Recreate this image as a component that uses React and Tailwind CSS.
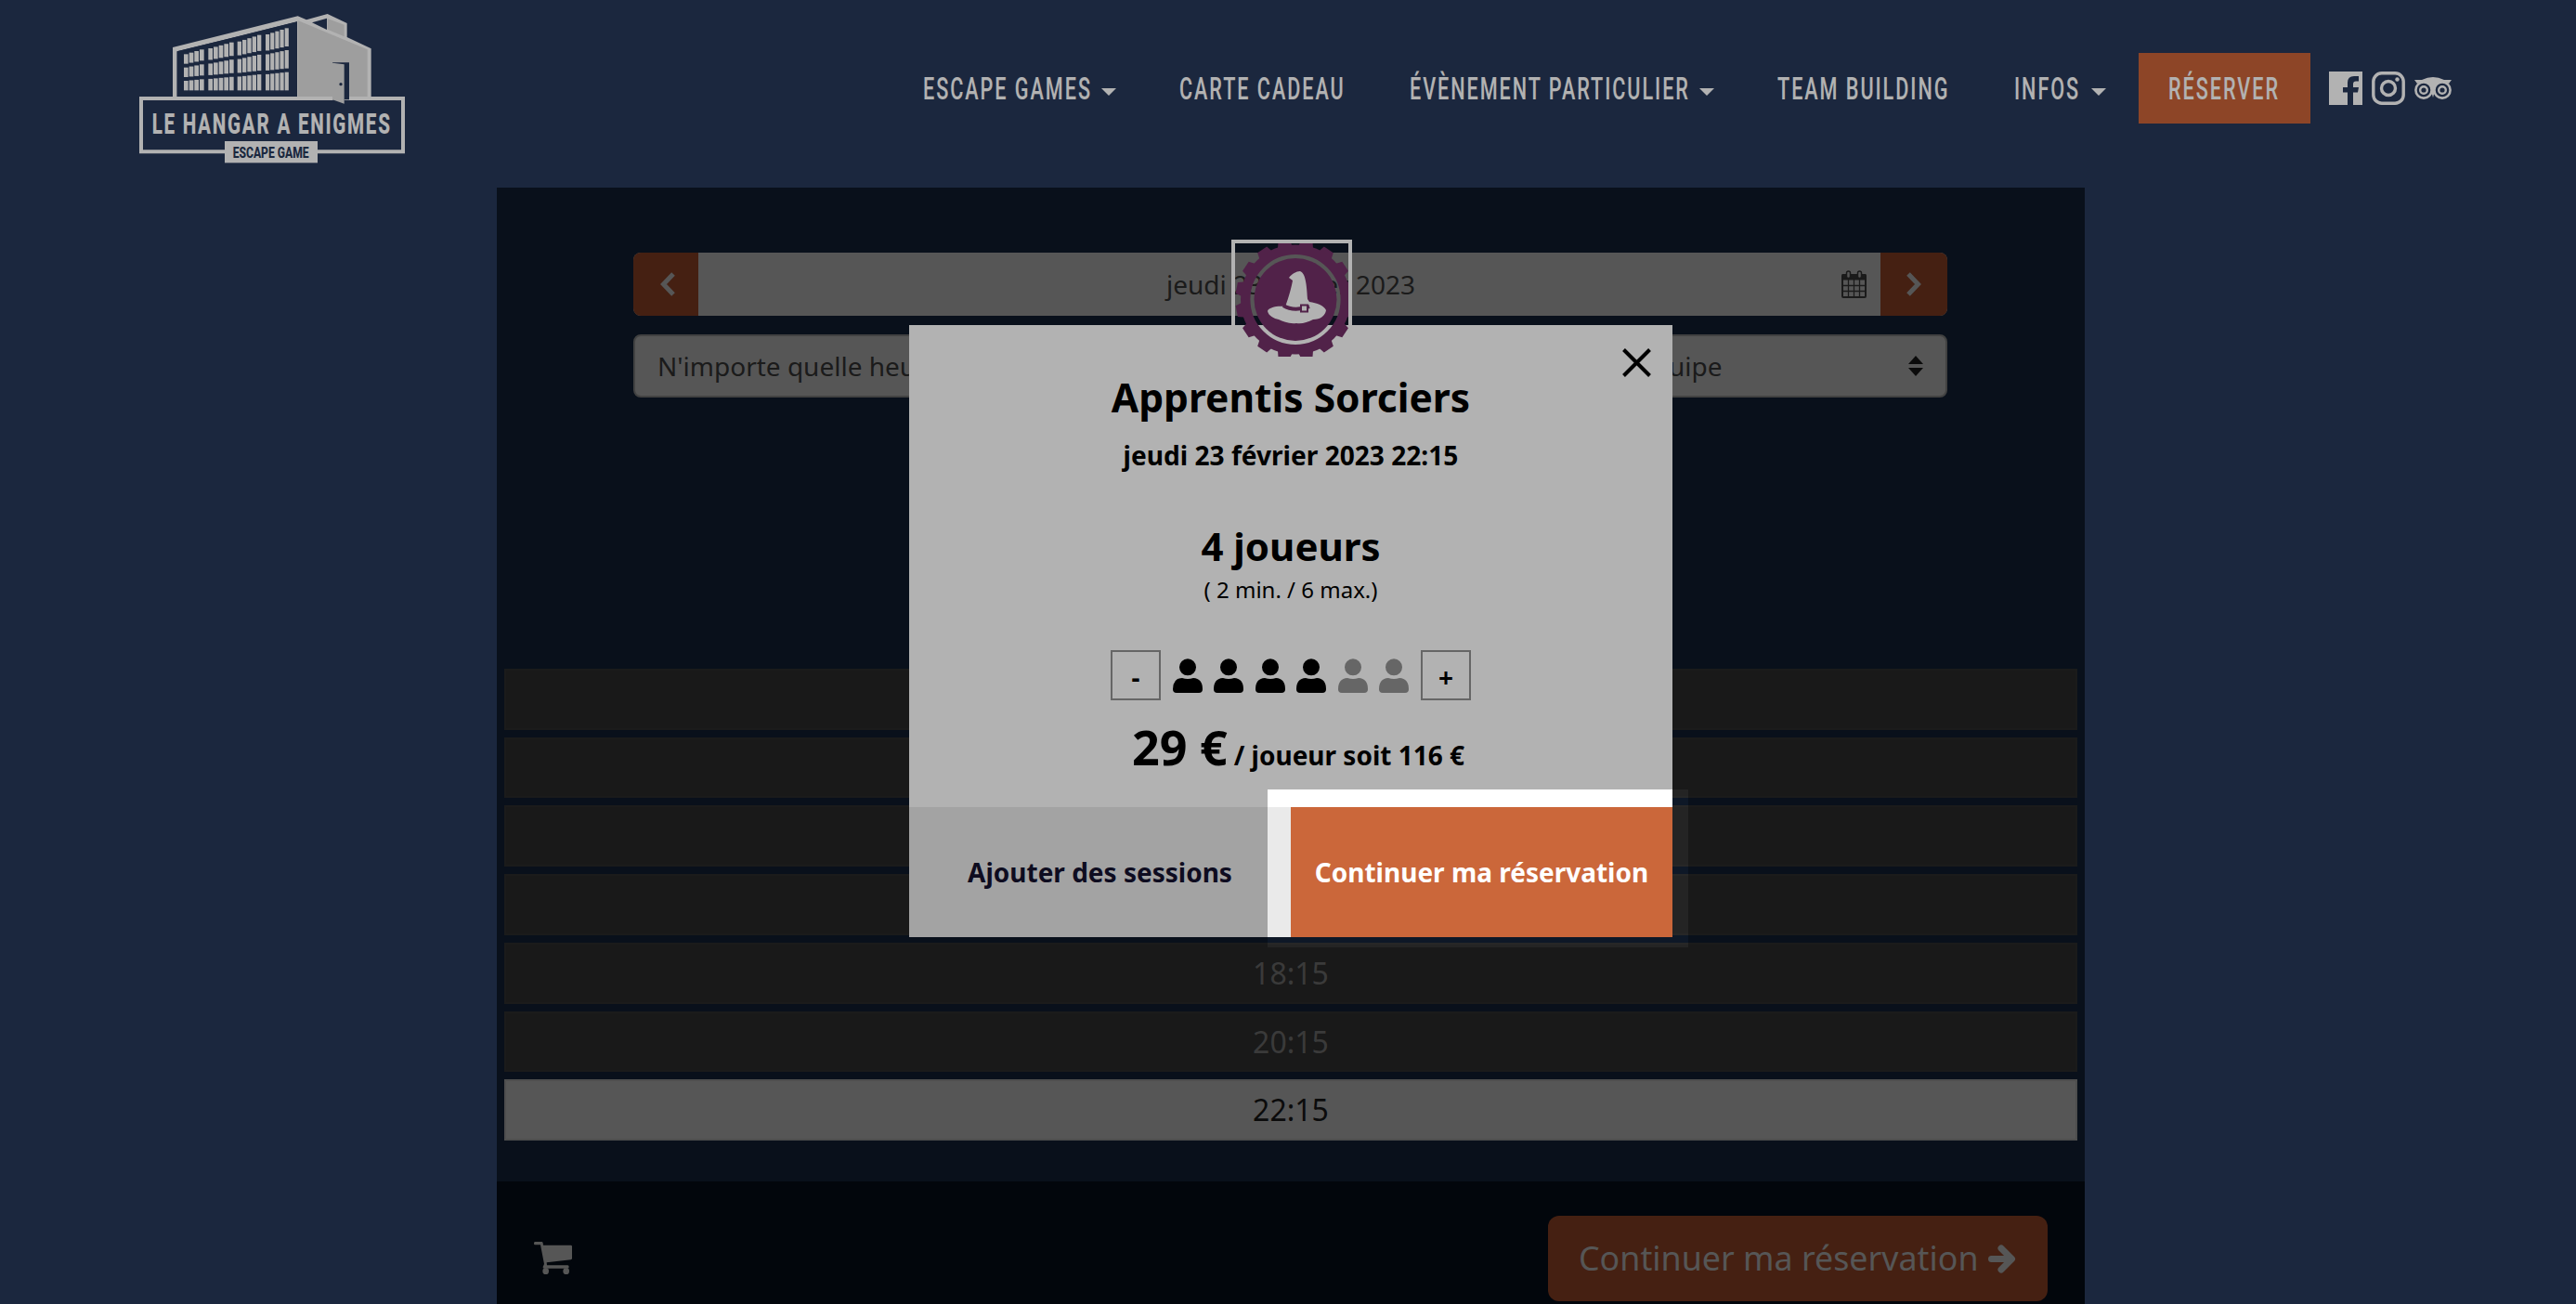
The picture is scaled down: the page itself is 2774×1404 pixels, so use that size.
import React, { useState } from 'react';

const navItems = [
    { label: 'ESCAPE GAMES', hasMenu: true, item: 'w-[276px]', text: 'w-[178px]' },
    { label: 'CARTE CADEAU', hasMenu: false, item: 'w-[248px]', text: 'w-[177px]' },
    { label: 'ÉVÈNEMENT PARTICULIER', hasMenu: true, item: 'w-[396px]', text: 'w-[298px]' },
    { label: 'TEAM BUILDING', hasMenu: false, item: 'w-[255px]', text: 'w-[185px]' },
    { label: 'INFOS', hasMenu: true, item: 'w-[134px]', text: 'w-[69px]' },
];

const slots = ['10:15', '12:15', '14:15', '16:15', '18:15', '20:15', '22:15'];

const MAX_PLAYERS = 6;
const MIN_PLAYERS = 2;
const PRICE = 29;

// Narrow uppercase lettering used in the menu
const NavText = ({ children, className }) => (
    <span className={`block shrink-0 pt-[2px] ${className}`}>
        <span className="inline-block origin-left scale-x-[0.655] whitespace-nowrap font-['Roboto'] text-[33px] leading-[40px] font-medium tracking-[3px]">
            {children}
        </span>
    </span>
);

const Logo = () => (
    <svg viewBox="0 0 990 600" className="h-[200px] w-[330px] shrink-0" fill="#ffffff">
        <path d="M168 312V153L572 52L600 64L668 45L731 75V120L809 157V312H797L570 312V70L182 166V312Z" />
        <path d="M182 312V166L570 70V312Z" fill="#28385a" />
        <path d="M618 73L666 59V96Z" fill="#28385a" />
        <path d="M572 66L797 160V312H572Z" fill="#e2e2e2" />
        <path d="M668 60L722 80V118L668 95Z" fill="#e2e2e2" />
        {[
            [204, 4, 17, 175, 160],
            [283, 5, 17, 156, 137],
            [377, 5, 16, 134, 113],
            [468, 5, 15.5, 111, 91],
        ].map(([x, n, w, y1, y2]) =>
            Array.from({ length: n }, (_, i) => {
                const top = y1 + ((y2 - y1) * i) / (n - 1);
                const h = (292 - top - 24) / 3;
                return [0, 1, 2].map((r) => (
                    <rect key={`${x}-${i}-${r}`} x={x + i * w} y={top + r * (h + 12)} width={w - 3} height={h} />
                ));
            })
        )}
        <path d="M66 318H912V490H66Z" fill="#28385a" stroke="#ffffff" strokeWidth="12" />
        <path d="M690 202H738V322H722V334L684 322V202Z" fill="#28385a" />
        <path d="M684 203L722 208V335L684 322Z" fill="#e2e2e2" />
        <circle cx="711" cy="272" r="5" fill="#28385a" />
        <text x="101" y="432" textLength="774" lengthAdjust="spacingAndGlyphs" fontFamily="Roboto" fontWeight="800" fontSize="96" letterSpacing="8">
            LE HANGAR A ENIGMES
        </text>
        <rect x="336" y="456" width="300" height="70" />
        <text x="362" y="509" textLength="246" lengthAdjust="spacingAndGlyphs" fontFamily="Roboto" fontWeight="800" fontSize="50" fill="#28385a">
            ESCAPE GAME
        </text>
    </svg>
);

const FacebookIcon = () => (
    <svg viewBox="0 0 36 36" className="h-9 w-9" fill="#ffffff">
        <path d="M0 0H36V36H26V22.500H31L32 17H26V13.500Q26 10.500 29 10.500H32V5H27Q20 5 20 12V17H15V22.500H20V36H0Z" />
    </svg>
);

const InstagramIcon = () => (
    <svg viewBox="0 0 36 36" className="h-9 w-9" fill="none" stroke="#ffffff">
        <rect x="1.8" y="1.8" width="32.4" height="32.4" rx="9" strokeWidth="3.4" />
        <circle cx="18" cy="18" r="7.5" strokeWidth="3.4" />
        <circle cx="27.5" cy="8.5" r="2.2" fill="#ffffff" stroke="none" />
    </svg>
);

const TripIcon = () => (
    <svg viewBox="0 0 40 24" className="h-6 w-10" fill="none" stroke="#ffffff">
        <path d="M0 3H8Q20 -3 32 3H40L37 7Q30 3 24 8L20 22L16 8Q10 3 3 7Z" fill="#ffffff" stroke="none" />
        <circle cx="10" cy="14" r="8.6" fill="#28385a" strokeWidth="2.6" />
        <circle cx="30" cy="14" r="8.6" fill="#28385a" strokeWidth="2.6" />
        <circle cx="10" cy="14" r="3.8" strokeWidth="2.4" />
        <circle cx="30" cy="14" r="3.8" strokeWidth="2.4" />
    </svg>
);

const CartIcon = () => (
    <svg viewBox="0 0 123 105" className="mt-[65px] h-[35px] w-[41px]" fill="#7c7c7c">
        <path d="M3 0H25Q28 0 29 4L30 11H119Q123 11 123 15V54Q123 57 119 58L41 67L42 76H109Q113 76 113 81Q113 86 109 86H33Q28 86 29 81L33 72L21 10H3Q0 10 0 5Q0 0 3 0Z" />
        <circle cx="38" cy="95" r="10" />
        <circle cx="104" cy="95" r="10" />
    </svg>
);

const GameBadge = () => (
    <svg viewBox="0 0 122 122" className="h-[122px] w-[122px]">
        <g fill="#753269">
            {Array.from({ length: 16 }, (_, i) => (
                <path key={i} d="M56.500 5L59 -4H71L73.500 5Z" transform={`rotate(${11.25 + i * 22.5} 65 60.500)`} />
            ))}
            <circle cx="65" cy="60.500" r="44.500" />
        </g>
        <circle cx="65" cy="60.500" r="53.800" fill="none" stroke="#753269" strokeWidth="10.400" />
        <path
            d="M54 68C58 58 61 46 62 40L58 37C61 33 66 30 70 30C75 32 77 40 78 60L80 63C88 64 96 67 98 72C97 78 92 82 84 82C78 85 72 87 66 86C58 87 52 84 47 82C42 81 36 78 35 73C36 69 45 67 54 68Z"
            fill="#ffffff"
        />
        <path d="M52 67Q63 74 80 68" fill="none" stroke="#753269" strokeWidth="4" />
        <rect x="71" y="66.500" width="7" height="7" fill="#ffffff" stroke="#753269" strokeWidth="2" />
    </svg>
);

const PlayerIcon = ({ active }) => (
    <svg viewBox="0 0 32 37" className={`h-[37px] w-8 ${active ? 'fill-black' : 'fill-[#929292]'}`}>
        <circle cx="16" cy="9.300" r="9" />
        <path d="M10 21Q16 23 22 21Q32 21.500 32 33Q32 37 28 37H4Q0 37 0 33Q0 21.500 10 21Z" />
    </svg>
);

const Header = () => (
    <header className="flex h-[202px] items-start pl-[130px] text-white">
        <Logo />
        <nav className="mt-[57px] ml-[534px] flex h-[76px] items-center">
            {navItems.map((n) => (
                <a key={n.label} className={`flex shrink-0 items-center ${n.item}`}>
                    <NavText className={n.text}>{n.label}</NavText>
                    {n.hasMenu && (
                        <span className="mt-2 ml-[14px] border-x-8 border-t-8 border-x-transparent border-t-white" />
                    )}
                </a>
            ))}
            <a className="flex h-[76px] w-[185px] items-center bg-[#cb6338] pl-8">
                <NavText className="w-[119px]">RÉSERVER</NavText>
            </a>
            <div className="ml-5 flex items-center gap-[10px]">
                <FacebookIcon />
                <InstagramIcon />
                <TripIcon />
            </div>
        </nav>
    </header>
);

const DateBar = () => (
    <div className="flex h-[68px] overflow-hidden rounded-lg bg-[#7c7c7c]">
        <button className="flex w-[70px] items-center justify-center bg-[#632f1b]">
            <svg viewBox="0 0 16 26" className="ml-1 h-[26px] w-4" fill="none" stroke="#7c7c7c" strokeWidth="5">
                <path d="M14 2L3.500 13L14 24" />
            </svg>
        </button>
        <div className="flex-1 pl-[3px] text-center text-[28px] leading-[68px]">jeudi 23 février 2023</div>
        <div className="flex w-0 items-center justify-end">
            <svg viewBox="0 0 27 30" className="mr-[15px] h-[30px] w-[27px] shrink-0" fill="none" stroke="#272727">
                <rect x="1" y="5" width="25" height="24" rx="1" strokeWidth="2" />
                <path d="M1 4.500H26V10H1Z" fill="#272727" strokeWidth="1" />
                <path d="M1 16.500H26M1 22.500H26M7.500 10V29M13.500 10V29M19.500 10V29" strokeWidth="1.300" />
                <rect x="5.500" y="1" width="4" height="7.500" rx="2" fill="#7c7c7c" strokeWidth="1.500" />
                <rect x="17.500" y="1" width="4" height="7.500" rx="2" fill="#7c7c7c" strokeWidth="1.500" />
            </svg>
        </div>
        <button className="flex w-[72px] items-center justify-center bg-[#632f1b]">
            <svg viewBox="0 0 16 26" className="h-[26px] w-4" fill="none" stroke="#7c7c7c" strokeWidth="5">
                <path d="M2 2L12.500 13L2 24" />
            </svg>
        </button>
    </div>
);

const Filter = ({ label, className }) => (
    <div className="flex h-[68px] items-center justify-between rounded-lg border-2 border-[#5f5f5f] bg-[#7c7c7c] pr-[24px] text-[28px] whitespace-nowrap">
        <span className={className}>{label}</span>
        <svg viewBox="0 0 16 22" className="h-[22px] w-4" fill="#111111">
            <path d="M0 9L8 0L16 9ZM0 13L8 22L16 13Z" />
        </svg>
    </div>
);

const BookingPanel = () => (
    <main className="ml-[535px] flex h-[1202px] w-[1710px] flex-col bg-[#0e1827] text-[#272727]">
        <div className="mt-[70px] flex flex-col gap-5 pr-[148px] pl-[147px]">
            <DateBar />
            <div className="grid grid-cols-2 gap-4">
                <Filter label="N'importe quelle heure" className="pl-6" />
                <Filter label="Taille de l'équipe" className="w-[455px] text-right" />
            </div>
        </div>
        <div className="mt-[291.750px] flex flex-col gap-2 px-2">
            {slots.map((slot) => (
                <div
                    key={slot}
                    className={`h-[65.750px] border-2 text-center text-[32px] leading-[62px] ${
                        slot === '22:15'
                            ? 'border-[#707070] bg-[#7c7c7c] text-[#111111]'
                            : 'border-[#272727] bg-[#242424] text-[#545454]'
                    }`}
                >
                    {slot}
                </div>
            ))}
        </div>
        <footer className="mt-auto flex h-[132px] items-start bg-[#040912] pl-10 text-[#7c7c7c]">
            <CartIcon />
            <button className="mt-[37px] ml-auto mr-10 flex h-[92px] w-[538px] items-center rounded-xl bg-[#632f1b] pl-[33px] text-[35.800px]">
                Continuer ma réservation
                <svg viewBox="0 0 30 31" className="ml-[10px] h-[31px] w-[30px]" fill="none" stroke="#7c7c7c" strokeWidth="7" strokeLinejoin="round" strokeLinecap="round">
                    <path d="M3.500 15.500H24M14 4L25.500 15.500L14 27" />
                </svg>
            </button>
        </footer>
    </main>
);

const BookingModal = () => {
    const [players, setPlayers] = useState(4);

    return (
        <section className="absolute top-[350px] left-[979px] flex h-[659px] w-[822px] flex-col items-center bg-white font-bold text-black">
            <div className="absolute -top-[92px] left-[347px] h-[130px] w-[130px] border-4 border-white">
                <GameBadge />
            </div>
            <button className="absolute top-[25px] right-[23px]">
                <svg viewBox="0 0 31 31" className="h-[31px] w-[31px]" stroke="#000000" strokeWidth="4">
                    <path d="M1.500 1.500L29.500 29.500M29.500 1.500L1.500 29.500" />
                </svg>
            </button>
            <h1 className="mt-[48px] text-[42.500px] leading-[60px]">Apprentis Sorciers</h1>
            <p className="mt-[12px] text-[28.100px] leading-[40px]">jeudi 23 février 2023 22:15</p>
            <h2 className="mt-[48px] text-[42px] leading-[60px]">{players} joueurs</h2>
            <p className="text-[24px] leading-[34px] font-normal">
                ( {MIN_PLAYERS} min. / {MAX_PLAYERS} max.)
            </p>
            <div className="mt-[48px] flex items-center">
                <button
                    onClick={() => setPlayers(Math.max(MIN_PLAYERS, players - 1))}
                    className="h-[54px] w-[54px] border-2 border-[#929292] pt-1 text-[28px] leading-[46px]"
                >
                    -
                </button>
                <div className="mx-[13px] flex w-[254px] justify-between">
                    {Array.from({ length: MAX_PLAYERS }, (_, i) => (
                        <PlayerIcon key={i} active={i < players} />
                    ))}
                </div>
                <button
                    onClick={() => setPlayers(Math.min(MAX_PLAYERS, players + 1))}
                    className="h-[54px] w-[54px] border-2 border-[#929292] pt-1 text-[28px] leading-[46px]"
                >
                    +
                </button>
            </div>
            <p className="mt-[14px] ml-4 flex items-baseline gap-[7px] text-[28px] leading-[40px] whitespace-nowrap">
                <span className="text-[52px] leading-[72px]">{PRICE} €</span>
                <span>/ joueur soit {PRICE * players} €</span>
            </p>
            <div className="mt-auto flex h-[140px] w-full text-[28px]">
                <button className="w-1/2 bg-[#eaeaea] text-[#15122f]">Ajouter des sessions</button>
                <button className="w-1/2 bg-[#cb673a] text-white">Continuer ma réservation</button>
            </div>
        </section>
    );
};

const App = () => (
    <div className="relative h-[1404px] w-[2774px] overflow-hidden bg-[#28385a] font-['Noto_Sans',sans-serif]">
        <Header />
        <BookingPanel />
        <BookingModal />
        {/* Spotlight: dims everything but the confirm button */}
        <div className="pointer-events-none absolute top-[850px] left-[1365px] h-[170px] w-[453px] shadow-[0_0_0_3000px_rgba(0,0,0,0.3)]" />
    </div>
);

export default App;
